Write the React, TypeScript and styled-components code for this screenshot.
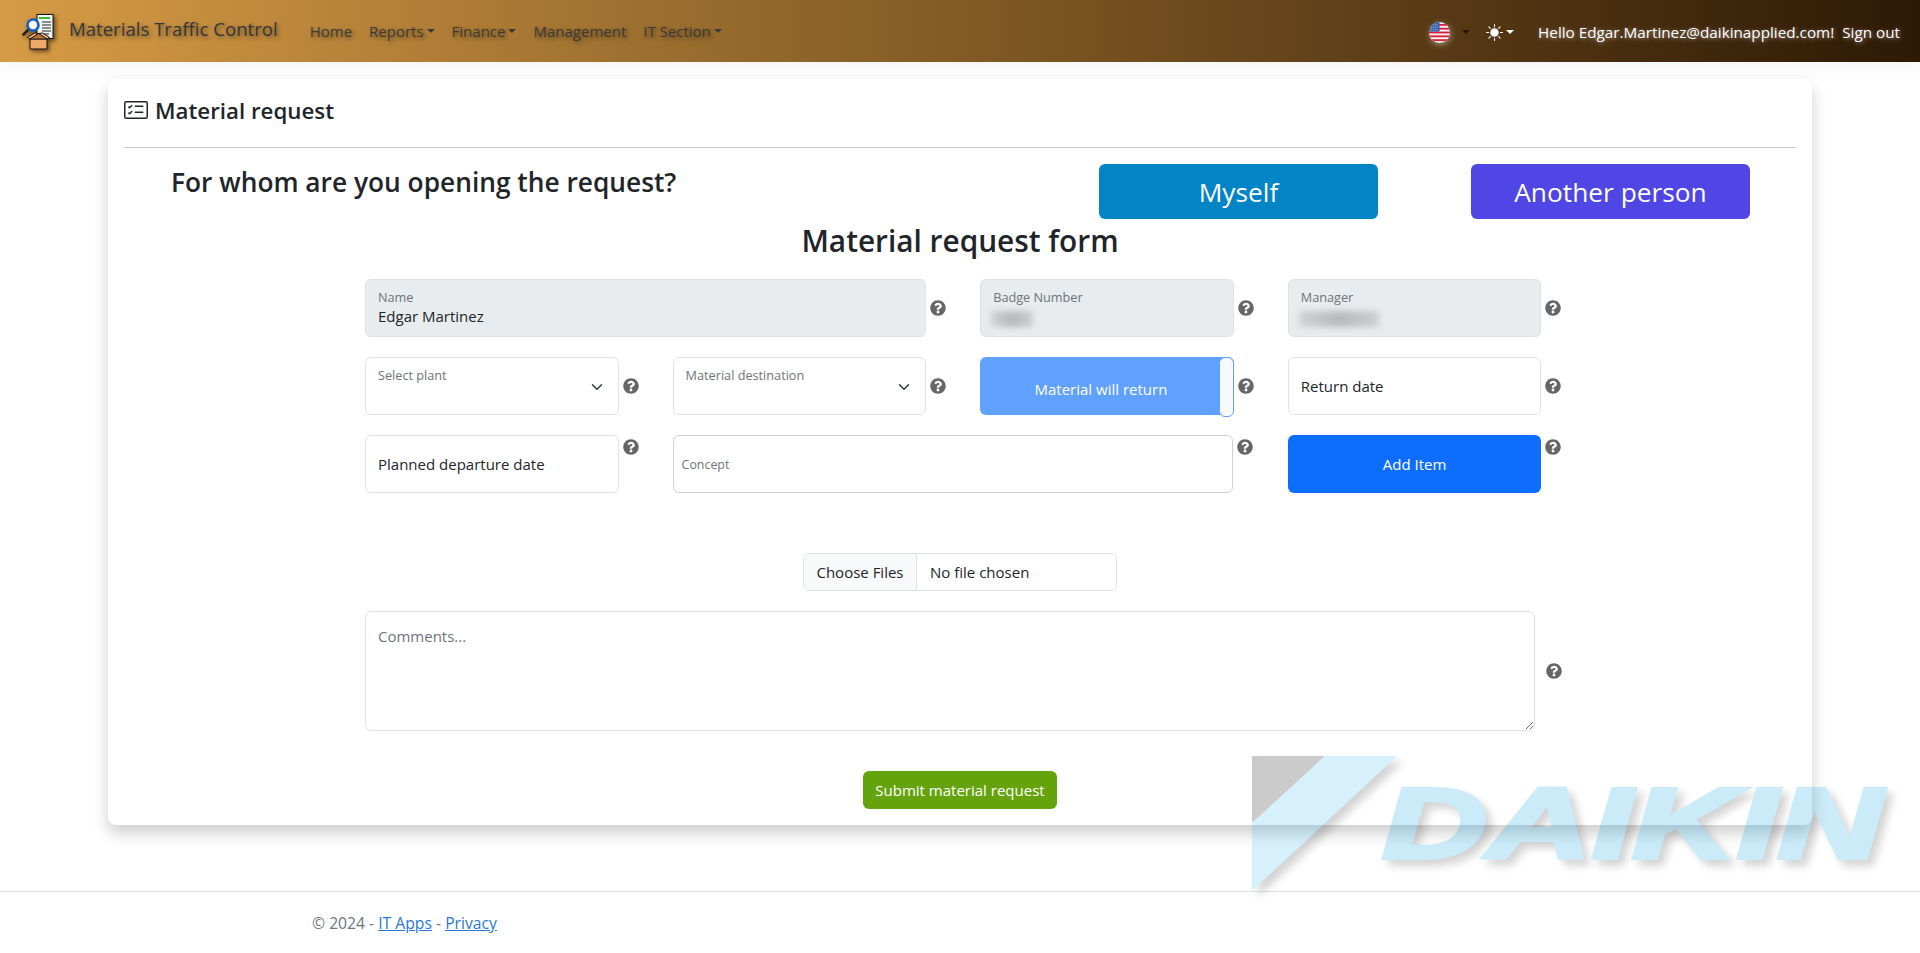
import React from "react";
import styled, { createGlobalStyle } from "styled-components";
import { FaQuestionCircle } from "react-icons/fa";
import { BsCardChecklist, BsSunFill } from "react-icons/bs";

const GlobalStyle = createGlobalStyle`
    html, body {
        margin: 0;
        padding: 0;
        background: #fff;
        font-family: "Open Sans", "Noto Sans", sans-serif;
        font-size: 15px;
        color: #212529;
    }
    * {
        box-sizing: border-box;
    }
`;

const Page = styled.div`
    position: relative;
    height: 953px;
    overflow: hidden;
    display: flex;
    flex-direction: column;
`;

const Navbar = styled.nav`
    height: 62px;
    flex: none;
    display: flex;
    align-items: center;
    padding: 0 20px 0 22px;
    background: linear-gradient(to right, #d69b45, #2d1905);
    box-shadow: 0 8px 16px rgba(0, 0, 0, 0.04);
`;

const Brand = styled.a`
    display: flex;
    align-items: center;
    gap: 15px;
    font-size: 18.6px;
    color: #33363a;
    text-shadow: 2px 2px 4px rgba(0, 0, 0, 0.45);
    margin-right: 32px;
    margin-top: -5px;
`;

const BrandIcon = styled.svg`
    width: 32px;
    height: 36px;
    margin-top: 6px;
    filter: drop-shadow(2px 2px 2px rgba(0, 0, 0, 0.55));
`;

const NavLinks = styled.div`
    display: flex;
    align-items: center;
    gap: 17px;
    flex: 1;
`;

const NavItem = styled.a<{ $caret?: boolean }>`
    color: #3b3a36;
    text-shadow: 2px 2px 4px rgba(0, 0, 0, 0.45);
    display: flex;
    align-items: center;
    ${(p) =>
        p.$caret &&
        `&::after {
            content: "";
            margin-left: 3px;
            border-top: 4.8px solid currentColor;
            border-left: 4.8px solid transparent;
            border-right: 4.8px solid transparent;
        }`}
`;

const NavRight = styled.div`
    display: flex;
    align-items: center;
    color: #fff;
    font-size: 15.25px;
    text-shadow: 1px 1px 4px rgba(255, 255, 255, 0.5);
    margin-top: 2px;
`;

const Caret = styled.span<{ $dark?: boolean }>`
    border-top: 4.8px solid ${(p) => (p.$dark ? "#241505" : "#fff")};
    border-left: 4.8px solid transparent;
    border-right: 4.8px solid transparent;
    margin-left: ${(p) => (p.$dark ? "12px" : "3px")};
    margin-right: ${(p) => (p.$dark ? "16px" : "24px")};
`;

const FlagIcon = styled.svg`
    width: 21px;
    height: 21px;
    filter: drop-shadow(1px 2px 3px rgba(255, 255, 255, 0.4));
`;

const SunIcon = styled(BsSunFill)`
    width: 17px;
    height: 17px;
    color: #fff;
`;

const SignOut = styled.a`
    margin-left: 8px;
`;

const Card = styled.main`
    flex: none;
    margin: 17px 108px 0;
    height: 746px;
    padding: 0 16px;
    background: #fff;
    border-radius: 8px;
    box-shadow: 0 8px 16px rgba(0, 0, 0, 0.2);
`;

const CardHeader = styled.header`
    height: 69px;
    display: flex;
    align-items: center;
    gap: 7px;
    padding-top: 4px;
    border-bottom: 1px solid #c8c8c8;
    margin-bottom: 16px;
    padding-bottom: 10px;
`;

const CardTitle = styled.h1`
    margin: 0;
    font-size: 22.3px;
    font-weight: 600;
    color: #212529;
`;

const QuestionRow = styled.div`
    height: 55px;
    display: flex;
    gap: 93px;
    padding: 0 46px 0 47px;
`;

const Question = styled.h2`
    flex: 1;
    margin: 0;
    font-size: 26.3px;
    font-weight: 600;
    line-height: 36px;
`;

const ChoiceButton = styled.button<{ $bg: string }>`
    width: 279px;
    height: 55px;
    border: 0;
    border-radius: 6px;
    background: ${(p) => p.$bg};
    color: #fff;
    font-family: inherit;
    font-size: 26.3px;
`;

const FormTitle = styled.h2`
    margin: 0;
    height: 60px;
    line-height: 44px;
    text-align: center;
    font-size: 29.8px;
    font-weight: 600;
`;

const FieldGrid = styled.div`
    margin-left: 241px;
    display: grid;
    grid-template-columns: repeat(4, 307.6px);
    grid-auto-rows: 58px;
    row-gap: 20px;
`;

const Cell = styled.div<{ $span?: number; $top?: boolean }>`
    grid-column: span ${(p) => p.$span ?? 1};
    display: flex;
    align-items: ${(p) => (p.$top ? "flex-start" : "center")};
    gap: 4px;
    width: ${(p) => ((p.$span ?? 1) === 2 ? 580.5 : 273.5)}px;
`;

const Help = styled(FaQuestionCircle)<{ $top?: boolean }>`
    flex: none;
    width: 16px;
    height: 16px;
    color: #666;
    margin-top: ${(p) => (p.$top ? "4px" : "0")};
`;

const Field = styled.div<{ $disabled?: boolean }>`
    position: relative;
    flex: 1;
    height: 58px;
    padding: 0 12px;
    border: 1px solid #dee2e6;
    border-radius: 6px;
    background: ${(p) => (p.$disabled ? "#e9ecef" : "#fff")};
    display: flex;
    flex-direction: column;
`;

const FloatLabel = styled.label`
    margin-top: 10px;
    font-size: 12.7px;
    line-height: 14px;
    color: #6d7479;
`;

const Value = styled.div`
    margin-top: 2px;
    line-height: 20px;
`;

const Blurred = styled.span<{ $width: number }>`
    position: absolute;
    left: 10px;
    top: 31px;
    width: ${(p) => p.$width}px;
    height: 16px;
    background: linear-gradient(to right, #d0d2d4, #b6b8ba 50%, #ccced0);
    filter: blur(3px);
`;

const Chevron = styled.svg`
    position: absolute;
    right: 15px;
    top: 23px;
    width: 12px;
    height: 12px;
`;

const DateField = styled(Field)`
    justify-content: center;
`;

const ConceptField = styled(Field)`
    justify-content: center;
    padding: 0 8px;
    border-color: #d0d0d0;
    font-size: 12.4px;
    color: #6d7479;
`;

const SwitchBox = styled.div`
    position: relative;
    flex: 1;
    height: 58px;
    padding-right: 12px;
    border-radius: 6px;
    background: #60a0ff;
    color: #fff;
    text-align: center;
    line-height: 64px;
    &::after {
        content: "";
        position: absolute;
        top: 0;
        right: 0;
        width: 13px;
        height: 58px;
        background: #f6f9ff;
        border: 1px solid #60a0ff;
        border-radius: 6px;
    }
`;

const AddButton = styled.button`
    flex: 1;
    height: 58px;
    border: 0;
    border-radius: 6px;
    background: #0d6efd;
    color: #fff;
    font-family: inherit;
    font-size: 15px;
`;

const FileRow = styled.div`
    margin: 60px auto 20px;
    width: 314px;
    height: 38px;
    display: flex;
    align-items: center;
    border: 1px solid #dee2e6;
    border-radius: 6px;
    overflow: hidden;
`;

const FileButton = styled.span`
    width: 113px;
    height: 100%;
    display: flex;
    align-items: center;
    justify-content: center;
    background: #f8f9fa;
    border-right: 1px solid #dee2e6;
`;

const FileName = styled.span`
    margin-left: 13px;
`;

const CommentRow = styled.div`
    margin-left: 241px;
    display: flex;
    align-items: center;
    gap: 11px;
`;

const Comments = styled.textarea`
    width: 1170px;
    height: 120px;
    display: block;
    padding: 14px 12px;
    border: 1px solid #dee2e6;
    border-radius: 6px;
    font-family: inherit;
    font-size: 15px;
    &::placeholder {
        color: #6d7479;
    }
`;

const SubmitRow = styled.div`
    margin-top: 40px;
    display: flex;
    justify-content: center;
`;

const SubmitButton = styled.button`
    width: 194px;
    height: 38px;
    border: 0;
    border-radius: 6px;
    background: #65a30d;
    color: #fff;
    font-family: inherit;
    font-size: 15px;
`;

const Footer = styled.footer`
    margin-top: 66px;
    border-top: 1px solid #dee2e6;
    padding: 20px 0 0 312px;
    color: #6c757d;
    font-size: 15.7px;
`;

const FooterLink = styled.a`
    color: #2a78d6;
    text-decoration: underline;
`;

const Watermark = styled.svg`
    position: absolute;
    left: 1240px;
    top: 745px;
    width: 680px;
    height: 170px;
    opacity: 0.2;
    pointer-events: none;
    filter: drop-shadow(6px 6px 4px rgba(0, 0, 0, 0.85));
`;

const BrandLogo = () => (
    <BrandIcon viewBox="0 0 32 36">
        <rect x="15" y="0.5" width="16" height="24" fill="#f4f6fa" stroke="#111" strokeWidth="1" />
        <rect x="17" y="3" width="11" height="2" fill="#3fb534" />
        <path d="M20 8h9M20 11h9M20 14h9M20 17h9M20 20h7" stroke="#222" strokeWidth="1.2" />
        <path d="M6 16L1.5 20.5" stroke="#222" strokeWidth="2.6" strokeLinecap="round" />
        <circle cx="11" cy="11" r="5.5" fill="#fff" stroke="#1b5fc0" strokeWidth="2.6" />
        <path d="M8 25h17v10H8z" fill="#f0a76a" stroke="#111" strokeWidth="1" />
        <path d="M16.5 19.5L8 25l-2.5-1.5 7-4.5zM16.5 19.5L25 25l2.5-1.5-7-4.5z" fill="#f8c08e" stroke="#111" strokeWidth="1" />
        <path d="M16.5 19.5L8 25h17z" fill="#b9713c" stroke="#111" strokeWidth="0.8" />
    </BrandIcon>
);

const UsFlag = () => (
    <FlagIcon viewBox="0 0 22 22">
        <defs>
            <clipPath id="flag-clip">
                <circle cx="11" cy="11" r="11" />
            </clipPath>
        </defs>
        <g clipPath="url(#flag-clip)">
            <rect width="22" height="22" fill="#f5f5f5" />
            {[2, 6, 10, 14, 18].map((y) => (
                <rect key={y} y={y} width="22" height="2" fill="#d8213b" />
            ))}
            <rect width="11" height="10" fill="#2f5fa8" />
            <path d="M2 3h8M2 5.5h8M2 8h8" stroke="#dfe8f5" strokeWidth="0.9" strokeDasharray="1 1" />
        </g>
    </FlagIcon>
);

const SelectChevron = () => (
    <Chevron viewBox="0 0 16 16">
        <path d="M2 5l6 6 6-6" fill="none" stroke="#343a40" strokeWidth="2" strokeLinecap="round" strokeLinejoin="round" />
    </Chevron>
);

const App = () => {
    return (
        <Page>
            <GlobalStyle />
            <Navbar>
                <Brand>
                    <BrandLogo />
                    Materials Traffic Control
                </Brand>
                <NavLinks>
                    <NavItem>Home</NavItem>
                    <NavItem $caret>Reports</NavItem>
                    <NavItem $caret>Finance</NavItem>
                    <NavItem>Management</NavItem>
                    <NavItem $caret>IT Section</NavItem>
                </NavLinks>
                <NavRight>
                    <UsFlag />
                    <Caret $dark />
                    <SunIcon />
                    <Caret />
                    <span>Hello Edgar.Martinez@daikinapplied.com!</span>
                    <SignOut>Sign out</SignOut>
                </NavRight>
            </Navbar>

            <Card>
                <CardHeader>
                    <BsCardChecklist size={24} />
                    <CardTitle>Material request</CardTitle>
                </CardHeader>
                <QuestionRow>
                    <Question>For whom are you opening the request?</Question>
                    <ChoiceButton $bg="#0284c7">Myself</ChoiceButton>
                    <ChoiceButton $bg="#4f46e5">Another person</ChoiceButton>
                </QuestionRow>
                <FormTitle>Material request form</FormTitle>
                <FieldGrid>
                    <Cell $span={2}>
                        <Field $disabled>
                            <FloatLabel>Name</FloatLabel>
                            <Value>Edgar Martinez</Value>
                        </Field>
                        <Help />
                    </Cell>
                    <Cell>
                        <Field $disabled>
                            <FloatLabel>Badge Number</FloatLabel>
                            <Blurred $width={42} />
                        </Field>
                        <Help />
                    </Cell>
                    <Cell>
                        <Field $disabled>
                            <FloatLabel>Manager</FloatLabel>
                            <Blurred $width={80} />
                        </Field>
                        <Help />
                    </Cell>

                    <Cell>
                        <Field>
                            <FloatLabel>Select plant</FloatLabel>
                            <SelectChevron />
                        </Field>
                        <Help />
                    </Cell>
                    <Cell>
                        <Field>
                            <FloatLabel>Material destination</FloatLabel>
                            <SelectChevron />
                        </Field>
                        <Help />
                    </Cell>
                    <Cell>
                        <SwitchBox>Material will return</SwitchBox>
                        <Help />
                    </Cell>
                    <Cell>
                        <DateField>Return date</DateField>
                        <Help />
                    </Cell>

                    <Cell $top>
                        <DateField>Planned departure date</DateField>
                        <Help $top />
                    </Cell>
                    <Cell $span={2} $top>
                        <ConceptField>Concept</ConceptField>
                        <Help $top />
                    </Cell>
                    <Cell $top>
                        <AddButton>Add Item</AddButton>
                        <Help $top />
                    </Cell>
                </FieldGrid>

                <FileRow>
                    <FileButton>Choose Files</FileButton>
                    <FileName>No file chosen</FileName>
                </FileRow>
                <CommentRow>
                    <Comments placeholder="Comments..." />
                    <Help />
                </CommentRow>
                <SubmitRow>
                    <SubmitButton>Submit material request</SubmitButton>
                </SubmitRow>
            </Card>

            <Footer>
                © 2024 - <FooterLink>IT Apps</FooterLink> - <FooterLink>Privacy</FooterLink>
            </Footer>

            <Watermark viewBox="0 0 680 170">
                <polygon points="12,11 85,11 12,78" fill="#000" />
                <polygon points="85,11 157,11 12,146 12,78" fill="#39bcf2" />
                <text
                    x="142"
                    y="113"
                    fontFamily="Liberation Sans, sans-serif"
                    fontWeight="700"
                    fontStyle="italic"
                    fontSize="100"
                    textLength="500"
                    lengthAdjust="spacingAndGlyphs"
                    fill="#00a0e4"
                    stroke="#00a0e4"
                    strokeWidth="4"
                >
                    DAIKIN
                </text>
            </Watermark>
        </Page>
    );
};

export default App;
